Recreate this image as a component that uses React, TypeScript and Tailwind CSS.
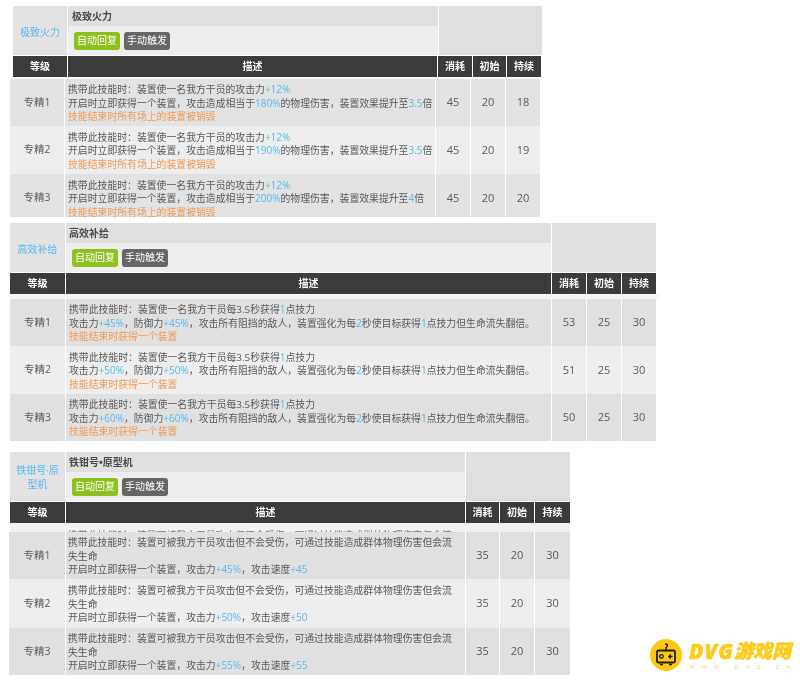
const B = ({ children }: { children: React.ReactNode }) => <span className="text-[10px] text-[#55b9ee]">{children}</span>
const O = ({ children }: { children: React.ReactNode }) => <div className="text-[#f09a55]">{children}</div>

type Row = { level: string; desc: React.ReactNode; cost: number; start: number; last: number }

const fire: Row[] = [
  { level: "专精1", cost: 45, start: 20, last: 18, desc: <FireDesc v="180%" x="3.5" /> },
  { level: "专精2", cost: 45, start: 20, last: 19, desc: <FireDesc v="190%" x="3.5" /> },
  { level: "专精3", cost: 45, start: 20, last: 20, desc: <FireDesc v="200%" x="4" /> },
]

const supply: Row[] = [
  { level: "专精1", cost: 53, start: 25, last: 30, desc: <SupplyDesc v="+45%" /> },
  { level: "专精2", cost: 51, start: 25, last: 30, desc: <SupplyDesc v="+50%" /> },
  { level: "专精3", cost: 50, start: 25, last: 30, desc: <SupplyDesc v="+60%" /> },
]

const proto: Row[] = [
  { level: "专精1", cost: 35, start: 20, last: 30, desc: <ProtoDesc v="+45%" s="+45" /> },
  { level: "专精2", cost: 35, start: 20, last: 30, desc: <ProtoDesc v="+50%" s="+50" /> },
  { level: "专精3", cost: 35, start: 20, last: 30, desc: <ProtoDesc v="+55%" s="+55" /> },
]

function FireDesc({ v, x }: { v: string; x: string }) {
  return (
    <>
      <div>携带此技能时：装置使一名我方干员的攻击力<B>+12%</B></div>
      <div className="whitespace-nowrap">开启时立即获得一个装置，攻击造成相当于<B>{v}</B>的物理伤害，装置效果提升至<B>{x}</B>倍</div>
      <O>技能结束时所有场上的装置被销毁</O>
    </>
  )
}

function SupplyDesc({ v }: { v: string }) {
  return (
    <>
      <div>携带此技能时：装置使一名我方干员每3.5秒获得<B>1</B>点技力</div>
      <div className="whitespace-nowrap">攻击力<B>{v}</B>，防御力<B>{v}</B>，攻击所有阻挡的敌人，装置强化为每<B>2</B>秒使目标获得<B>1</B>点技力但生命流失翻倍。</div>
      <O>技能结束时获得一个装置</O>
    </>
  )
}

function ProtoDesc({ v, s }: { v: string; s: string }) {
  return (
    <>
      <div>携带此技能时：装置可被我方干员攻击但不会受伤，可通过技能造成群体物理伤害但会流失生命</div>
      <div>开启时立即获得一个装置，攻击力<B>{v}</B>，攻击速度<B>{s}</B></div>
    </>
  )
}

function Tags() {
  return (
    <div className="flex gap-[4px] text-[10px] text-white">
      <span className="flex h-[18px] w-[46px] items-center justify-center rounded-[3px] bg-[#8cc11f]">自动回复</span>
      <span className="flex h-[18px] w-[46px] items-center justify-center rounded-[3px] bg-[#666666]">手动触发</span>
    </div>
  )
}

function HeadCells() {
  return (
    <>
      <div className="flex items-center justify-center bg-[#3b3b3b]">等级</div>
      <div className="flex items-center justify-center bg-[#3b3b3b]">描述</div>
      <div className="flex items-center justify-center bg-[#3b3b3b]">消耗</div>
      <div className="flex items-center justify-center bg-[#3b3b3b]">初始</div>
      <div className="flex items-center justify-center bg-[#3b3b3b]">持续</div>
    </>
  )
}

function RowCells({ row, bg, pad }: { row: Row; bg: string; pad: string }) {
  return (
    <>
      <div className={`flex items-center justify-center text-[10.5px] ${bg}`}>{row.level}</div>
      <div className={`flex flex-col justify-center pt-[2px] text-[9.85px] leading-[13.4px] ${pad} ${bg}`}>{row.desc}</div>
      <div className={`flex items-center justify-center text-[11px] ${bg}`}>{row.cost}</div>
      <div className={`flex items-center justify-center text-[11px] ${bg}`}>{row.start}</div>
      <div className={`flex items-center justify-center text-[11px] ${bg}`}>{row.last}</div>
    </>
  )
}

function Logo() {
  return (
    <div className="absolute left-[650px] top-[639px] flex items-center gap-[7px]">
      <svg width="32" height="32" viewBox="0 0 32 32">
        <circle cx="16" cy="16" r="16" fill="#fdc90f" />
        <path d="M16 11V9c0-1 1.500-1 1.500-2.500S16 5 15 5" fill="none" stroke="#1a1a1a" strokeWidth="1.400" />
        <rect x="7" y="11.500" width="18" height="12" rx="1.500" fill="none" stroke="#1a1a1a" strokeWidth="1.800" />
        <circle cx="11.500" cy="17.500" r="1.800" fill="none" stroke="#1a1a1a" strokeWidth="1.300" />
        <path d="M18 17.500h4.500M20.250 15.300v4.400" stroke="#1a1a1a" strokeWidth="1.500" />
        <path d="M10 25.500h3M19 25.500h3" stroke="#1a1a1a" strokeWidth="1.400" />
      </svg>
      <div className="flex w-[102px] flex-col">
        <div className="flex items-center justify-between whitespace-nowrap font-black italic leading-[22px] text-[#fdcb1c] [-webkit-text-stroke:0.5px_#fdcb1c]">
          <span className="text-[21px] tracking-[1px]">DVG</span>
          <span className="text-[19px]">游戏网</span>
        </div>
        <div className="mt-[1px] flex justify-between text-[6px] leading-[8px] text-[#e8d48a]">
          <span>W</span><span>W</span><span>W</span><span>.</span><span>D</span><span>V</span><span>G</span><span>.</span><span>C</span><span>N</span>
        </div>
      </div>
    </div>
  )
}

export default function App() {
  return (
    <div className="relative h-[681px] w-[800px] overflow-hidden bg-white pt-[6px] text-[#5a5a5a] blur-[0.35px] [font-family:'Open_Sans','Noto_Sans_CJK_SC',sans-serif]">
      {/* 极致火力 */}
      <div className="ml-[13px] grid w-[528px] grid-cols-[54px_370px_103px] grid-rows-[20px_29px] gap-x-px">
        <div className="row-span-2 flex items-center justify-center bg-[#e2e2e2] pt-[3px] text-[10px] text-[#55b9ee]">极致火力</div>
        <div className="flex items-center bg-[#e0e0e0] pl-[4px] text-[10px] font-bold text-[#4a4a4a]">极致火力</div>
        <div className="row-span-2 bg-[#dfdfdf]" />
        <div className="flex items-center bg-[#eeeeee] pl-[6px]"><Tags /></div>
      </div>
      <div className="ml-[13px] mt-[1px] grid h-[21px] w-[528px] grid-cols-[54px_369px_34px_33px_34px] gap-x-px text-[10px] font-bold text-white">
        <HeadCells />
      </div>
      <div className="ml-[10px] mt-[2px] h-[138px] w-[530px] overflow-hidden">
        <div className="grid grid-cols-[54px_370px_34px_34px_34px] grid-rows-[47px_48px_48px] gap-x-px">
          <RowCells row={fire[0]} bg="bg-[#e2e2e2]" pad="pl-[3px]" />
          <RowCells row={fire[1]} bg="bg-[#eeeeee]" pad="pl-[3px]" />
          <RowCells row={fire[2]} bg="bg-[#e2e2e2]" pad="pl-[3px]" />
        </div>
      </div>

      {/* 高效补给 */}
      <div className="ml-[10px] mt-[6px] grid w-[646px] grid-cols-[55px_485px_104px] grid-rows-[20px_29px] gap-x-px">
        <div className="row-span-2 flex items-center justify-center bg-[#e2e2e2] pt-[3px] text-[10px] text-[#55b9ee]">高效补给</div>
        <div className="flex items-center bg-[#e0e0e0] pl-[3px] text-[10px] font-bold text-[#4a4a4a]">高效补给</div>
        <div className="row-span-2 bg-[#dfdfdf]" />
        <div className="flex items-center bg-[#eeeeee] pl-[6px]"><Tags /></div>
      </div>
      <div className="ml-[10px] mt-[1px] grid h-[21px] w-[646px] grid-cols-[55px_485px_34px_34px_34px] gap-x-px text-[10px] font-bold text-white">
        <HeadCells />
      </div>
      <div className="ml-[10px] h-[5px] w-[650px] bg-[#f5f5f5]" />
      <div className="ml-[10px] grid w-[646px] grid-cols-[55px_485px_34px_34px_34px] grid-rows-[47px_48px_47px] gap-x-px">
        <RowCells row={supply[0]} bg="bg-[#e0e0e0]" pad="pl-[3px]" />
        <RowCells row={supply[1]} bg="bg-[#eeeeee]" pad="pl-[3px]" />
        <RowCells row={supply[2]} bg="bg-[#e0e0e0]" pad="pl-[3px]" />
      </div>

      {/* 铁钳号·原型机 */}
      <div className="ml-[10px] mt-[11px] grid w-[560px] grid-cols-[55px_399px_104px] grid-rows-[20px_29px] gap-x-px">
        <div className="row-span-2 flex items-center justify-center bg-[#e2e2e2] px-[3px] text-center text-[10px] leading-[14px] text-[#55b9ee]">铁钳号·原型机</div>
        <div className="flex items-center bg-[#e0e0e0] pl-[3px] text-[10px] font-bold text-[#4a4a4a]">铁钳号•原型机</div>
        <div className="row-span-2 bg-[#dfdfdf]" />
        <div className="flex items-center bg-[#eeeeee] pl-[6px]"><Tags /></div>
      </div>
      <div className="ml-[10px] mt-[1px] grid h-[21px] w-[560px] grid-cols-[55px_399px_33px_34px_35px] gap-x-px text-[10px] font-bold text-white">
        <HeadCells />
      </div>
      <div className="ml-[10px] h-[9px] w-[560px] overflow-hidden bg-[#f1f1f1] pl-[58px] pt-[6px] text-[9.85px] leading-[13.400px] text-[#777777]">
        携带此技能时：装置可被我方干员攻击但不会受伤，可通过技能造成群体物理伤害但会流
      </div>
      <div className="ml-[9px] grid w-[561px] grid-cols-[56px_399px_33px_34px_35px] grid-rows-[47px_49px_47px] gap-x-px">
        <RowCells row={proto[0]} bg="bg-[#e0e0e0]" pad="pl-[2px] pr-[12px]" />
        <RowCells row={proto[1]} bg="bg-[#eeeeee]" pad="pl-[2px] pr-[12px]" />
        <RowCells row={proto[2]} bg="bg-[#e0e0e0]" pad="pl-[2px] pr-[12px]" />
      </div>

      <Logo />
    </div>
  )
}
